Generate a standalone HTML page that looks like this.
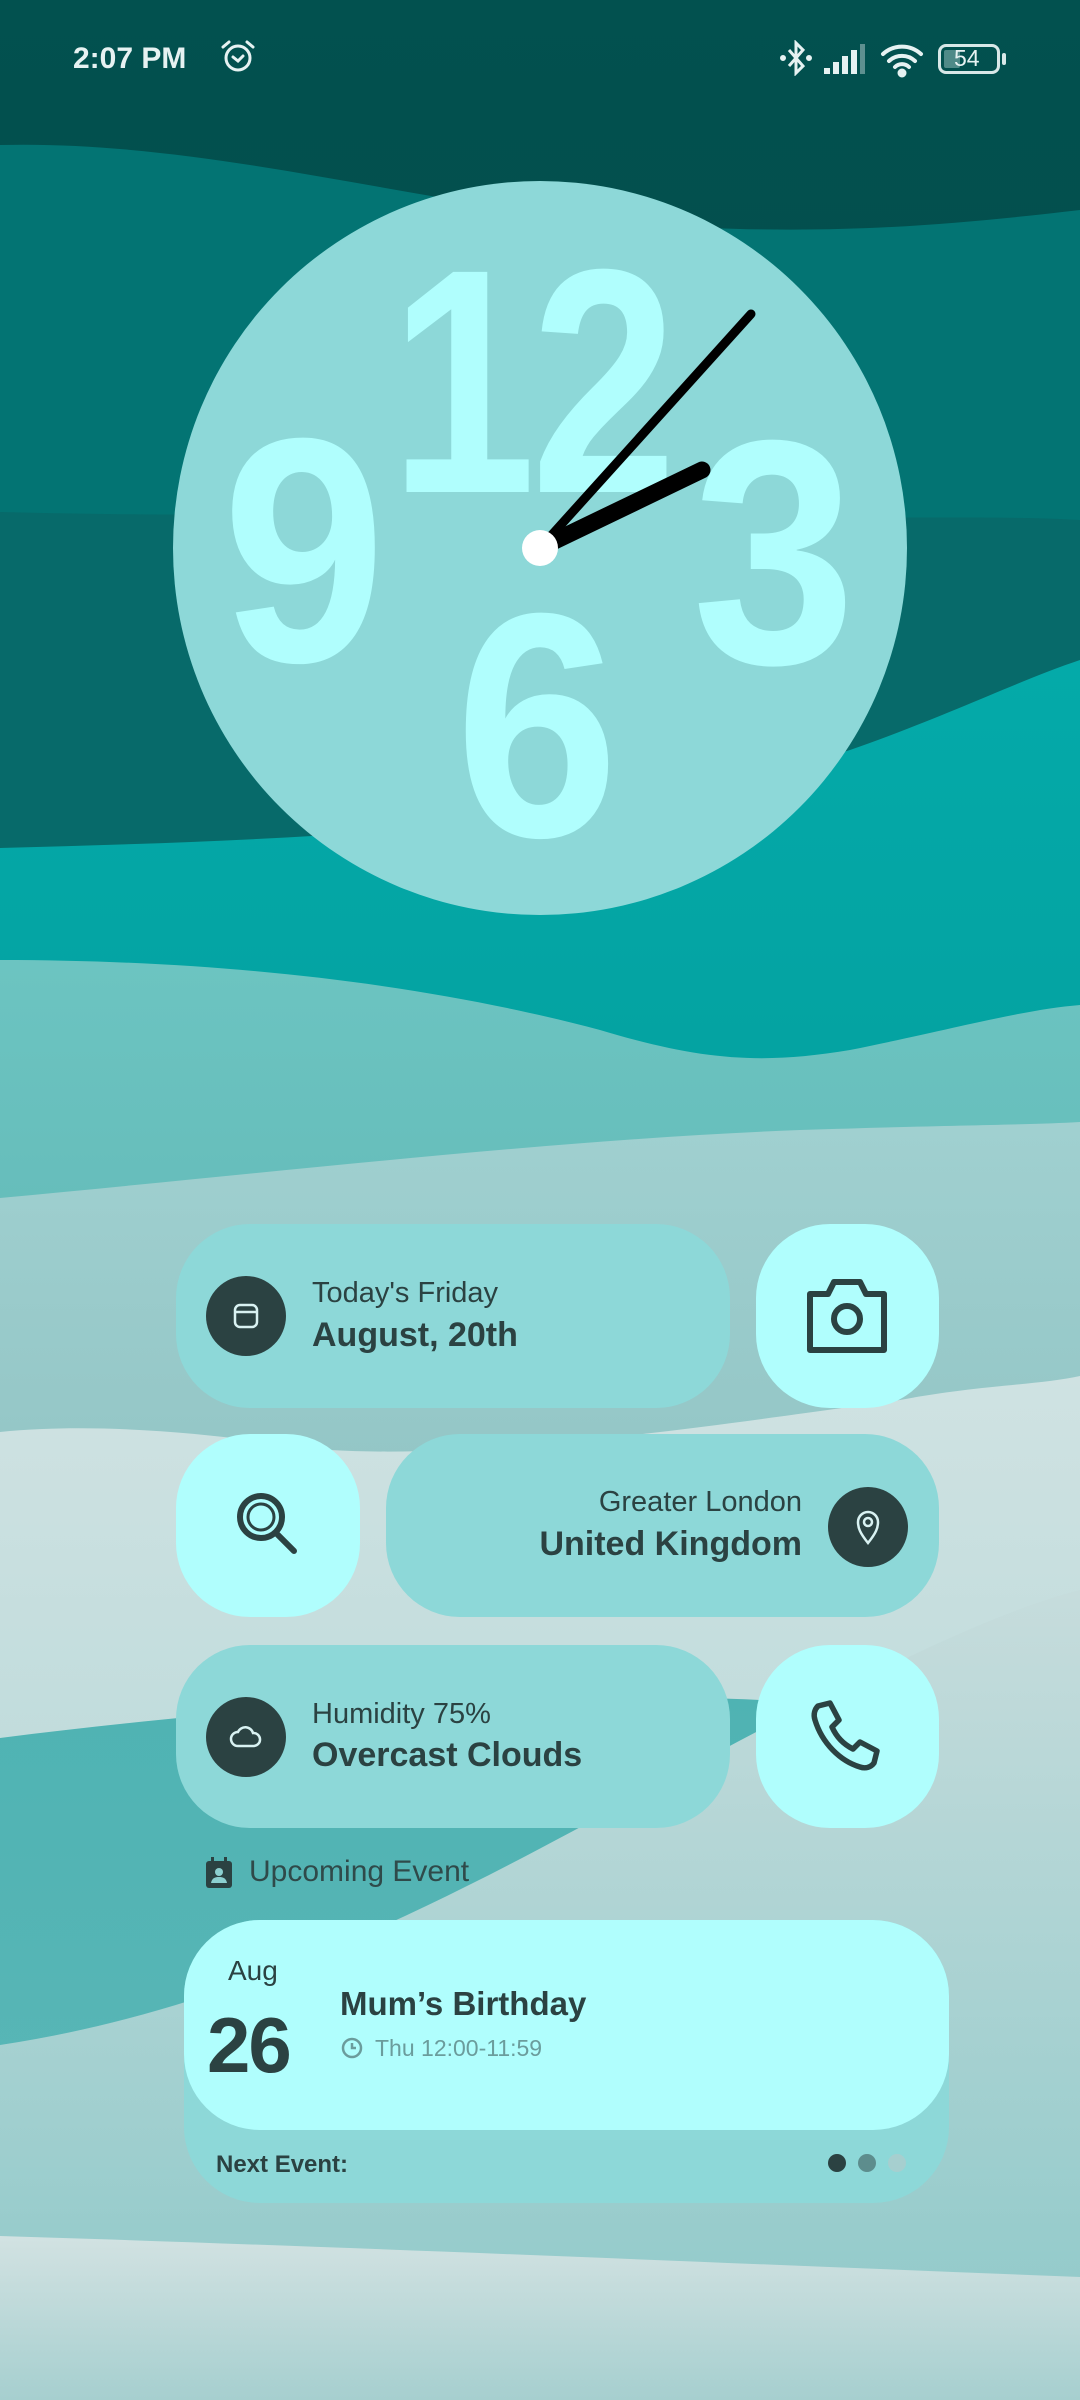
<!DOCTYPE html>
<html><head><meta charset="utf-8"><style>
*{margin:0;padding:0;box-sizing:border-box}
body{width:1080px;height:2400px;overflow:hidden;position:relative;font-family:"Liberation Sans",sans-serif;background:#0a4a4c}
.abs{position:absolute}
.w{position:absolute;border-radius:74px;background:#8dd8d8}
.b{background:#b0fefd}
.dc{position:absolute;width:80px;height:80px;border-radius:50%;background:#2b4242}
.t1{position:absolute;font-size:29px;color:#2b4242}
.t2{position:absolute;font-size:34px;font-weight:bold;color:#2b4242}
.num{position:absolute;font-family:"Liberation Sans",sans-serif;font-weight:bold;font-size:160px;line-height:160px;color:#b0fefd;transform-origin:0 0;white-space:nowrap}
</style></head><body>
<svg class="abs" style="left:0;top:0" width="1080" height="2400" viewBox="0 0 1080 2400">
<defs>
<linearGradient id="g0" x1="0" y1="0" x2="0" y2="1"><stop offset="0" stop-color="#02514f"/><stop offset="1" stop-color="#0b3f40"/></linearGradient>
<linearGradient id="g4" x1="0" y1="0" x2="0" y2="1"><stop offset="0" stop-color="#04aaa9"/><stop offset="1" stop-color="#028a89"/></linearGradient>
<linearGradient id="g5" x1="0" y1="0" x2="0" y2="1"><stop offset="0" stop-color="#6cc4c1"/><stop offset="1" stop-color="#4a9d9d"/></linearGradient>
<linearGradient id="g6" x1="0" y1="0" x2="0" y2="1"><stop offset="0" stop-color="#a0d0d0"/><stop offset="1" stop-color="#72abab"/></linearGradient>
<linearGradient id="g7" x1="0" y1="0" x2="0" y2="1"><stop offset="0" stop-color="#cfe2e2"/><stop offset="1" stop-color="#a8d2d2"/></linearGradient>
<linearGradient id="g8" x1="0" y1="0" x2="0" y2="1"><stop offset="0" stop-color="#4fb3b3"/><stop offset="1" stop-color="#5fb8b8"/></linearGradient>
<linearGradient id="gP2" x1="0" y1="0" x2="0" y2="1"><stop offset="0" stop-color="#c6dcdc"/><stop offset="1" stop-color="#8cc8c8"/></linearGradient>
<linearGradient id="g9" x1="0" y1="0" x2="0" y2="1"><stop offset="0" stop-color="#d2e2e2"/><stop offset="1" stop-color="#a6cfcf"/></linearGradient>
</defs>
<rect width="1080" height="2400" fill="url(#g0)"/>
<path d="M0 145 C200 140 400 200 600 220 C800 240 950 225 1080 210 L1080 2400 L0 2400Z" fill="#037473"/>
<path d="M0 512 C300 520 500 505 700 515 C900 520 1000 515 1080 520 L1080 2400 L0 2400Z" fill="#076a6a"/>
<path d="M0 848 C300 840 600 830 850 750 C950 715 1020 680 1080 660 L1080 2400 L0 2400Z" fill="url(#g4)"/>
<path d="M0 960 C250 960 450 990 600 1030 C700 1060 760 1065 850 1050 C950 1030 1020 1010 1080 1005 L1080 2400 L0 2400Z" fill="url(#g5)"/>
<path d="M0 1198 C300 1170 550 1140 800 1130 C950 1125 1030 1125 1080 1122 L1080 2400 L0 2400Z" fill="url(#g6)"/>
<path d="M0 1432 C120 1420 250 1440 330 1450 C500 1460 750 1420 900 1400 C980 1385 1040 1385 1080 1376 L1080 2400 L0 2400Z" fill="url(#g7)"/>
<path d="M0 1738 C300 1700 550 1690 760 1700 C900 1706 1000 1700 1080 1700 L1080 2400 L0 2400Z" fill="url(#g8)"/>
<path d="M0 2045 C300 2000 550 1840 760 1730 C900 1660 1000 1610 1080 1590 L1080 2400 L0 2400Z" fill="url(#gP2)"/>
<path d="M0 2236 C300 2245 700 2262 1080 2277 L1080 2400 L0 2400Z" fill="url(#g9)"/>
<circle cx="540" cy="548" r="367" fill="#8dd8d8"/>
</svg>

<!-- status bar -->
<div class="abs" style="left:73px;top:42px;font-size:30px;font-weight:bold;color:#e6f2f2">2:07 PM</div>
<svg class="abs" style="left:220px;top:38px" width="36" height="36" viewBox="0 0 36 36" fill="none" stroke="#e6f2f2" stroke-width="3"><circle cx="18" cy="20" r="12"/><path d="M13 19l5 4 5-5M3 9l6-5M33 9l-6-5" stroke-linecap="round"/></svg>
<svg class="abs" style="left:780px;top:40px" width="32" height="36" viewBox="0 0 32 36" fill="none" stroke="#e6f2f2" stroke-width="3"><path d="M9 10l14 16-7 7V3l7 7L9 26"/><circle cx="3" cy="18" r="1.5" fill="#e6f2f2"/><circle cx="29" cy="18" r="1.5" fill="#e6f2f2"/></svg>
<svg class="abs" style="left:824px;top:44px" width="42" height="30" viewBox="0 0 42 30"><rect x="0" y="24" width="6" height="6" fill="#e6f2f2"/><rect x="9" y="18" width="6" height="12" fill="#e6f2f2"/><rect x="18" y="12" width="6" height="18" fill="#e6f2f2"/><rect x="27" y="6" width="6" height="24" fill="#e6f2f2"/><rect x="36" y="0" width="5" height="30" fill="#5e9090"/></svg>
<svg class="abs" style="left:880px;top:42px" width="46" height="36" viewBox="0 0 46 36" fill="none" stroke="#e6f2f2" stroke-width="4" stroke-linecap="round"><path d="M3 12a28 28 0 0 1 38 0M9 19a19 19 0 0 1 26 0M15 25a10 10 0 0 1 14 0"/><circle cx="22" cy="31" r="2.5" fill="#e6f2f2"/></svg>
<div class="abs" style="left:938px;top:44px;width:62px;height:30px;border:3px solid #d8e8e8;border-radius:8px"></div>
<div class="abs" style="left:944px;top:50px;width:16px;height:18px;background:#4f8a88;border-radius:2px"></div>
<div class="abs" style="left:1002px;top:53px;width:4px;height:12px;background:#d8e8e8;border-radius:2px"></div>
<div class="abs" style="left:954px;top:45px;font-size:23px;color:#e6f2f2">54</div>

<!-- clock numerals -->
<div class="num" style="left:390px;top:222px;transform:scale(1.64,2);letter-spacing:-3px">12</div>
<div class="num" style="left:222px;top:391px;transform:scale(1.84,2)">9</div>
<div class="num" style="left:692px;top:393px;transform:scale(1.84,2)">3</div>
<div class="num" style="left:455px;top:566px;transform:scale(1.84,2)">6</div>
<svg class="abs" style="left:0;top:0" width="1080" height="950" viewBox="0 0 1080 950">
<line x1="540" y1="548" x2="751" y2="314" stroke="#000" stroke-width="9" stroke-linecap="round"/>
<line x1="540" y1="548" x2="702" y2="470" stroke="#000" stroke-width="17" stroke-linecap="round"/>
<circle cx="540" cy="548" r="18" fill="#fff"/>
</svg>

<!-- widgets -->
<div class="w" style="left:176px;top:1224px;width:554px;height:184px"></div>
<div class="dc" style="left:206px;top:1276px"></div>
<svg class="abs" style="left:232px;top:1302px" width="28" height="28" viewBox="0 0 28 28" fill="none" stroke="#d9f2f2" stroke-width="2.5"><rect x="3" y="3" width="22" height="22" rx="5"/><path d="M3 10h22"/></svg>
<div class="t1" style="left:312px;top:1277px">Today's Friday</div>
<div class="t2" style="left:312px;top:1316px">August, 20th</div>

<div class="w b" style="left:756px;top:1224px;width:183px;height:184px"></div>
<svg class="abs" style="left:802px;top:1274px" width="90" height="84" viewBox="0 0 90 84" fill="none" stroke="#2b4242" stroke-width="6" stroke-linejoin="round"><path d="M8 20h18l6-12h26l6 12h18v56H8z"/><circle cx="45" cy="45" r="13"/></svg>

<div class="w b" style="left:176px;top:1434px;width:184px;height:183px"></div>
<svg class="abs" style="left:232px;top:1488px" width="74" height="74" viewBox="0 0 74 74" fill="none" stroke="#2b4242" stroke-width="6" stroke-linecap="round"><circle cx="29" cy="29" r="21"/><circle cx="29" cy="29" r="13" stroke-width="3"/><path d="M45 46l17 17"/></svg>

<div class="w" style="left:386px;top:1434px;width:553px;height:183px"></div>
<div class="t1" style="left:400px;top:1486px;width:402px;text-align:right">Greater London</div>
<div class="t2" style="left:400px;top:1525px;width:402px;text-align:right">United Kingdom</div>
<div class="dc" style="left:828px;top:1487px"></div>
<svg class="abs" style="left:854px;top:1507px" width="28" height="40" viewBox="0 0 28 40" fill="none" stroke="#d9f2f2" stroke-width="2.5"><path d="M14 36C6 26 4 21 4 15a10 10 0 0 1 20 0c0 6-2 11-10 21z"/><circle cx="14" cy="15" r="4"/></svg>

<div class="w" style="left:176px;top:1645px;width:554px;height:183px"></div>
<div class="dc" style="left:206px;top:1697px"></div>
<svg class="abs" style="left:228px;top:1722px" width="36" height="30" viewBox="0 0 36 30" fill="none" stroke="#d9f2f2" stroke-width="2.5"><path d="M10 24a7 7 0 0 1 0-14 8 8 0 0 1 15 1 6.5 6.5 0 0 1 1 13z"/></svg>
<div class="t1" style="left:312px;top:1698px">Humidity 75%</div>
<div class="t2" style="left:312px;top:1736px">Overcast Clouds</div>

<div class="w b" style="left:756px;top:1645px;width:183px;height:183px"></div>
<svg class="abs" style="left:808px;top:1698px" width="76" height="76" viewBox="0 0 76 76" fill="none" stroke="#2b4242" stroke-width="5.5" stroke-linejoin="round"><path d="M10 8l12-3 9 17-7 7c4 9 11 17 21 22l7-7 17 9-3 12c-3 4-8 6-14 4C32 63 14 45 7 22c-2-6 0-11 3-14z"/></svg>

<!-- upcoming -->
<svg class="abs" style="left:205px;top:1857px" width="28" height="32" viewBox="0 0 28 32"><rect x="1" y="4" width="26" height="27" rx="3" fill="#2b4242"/><rect x="6" y="0" width="3" height="7" fill="#2b4242"/><rect x="19" y="0" width="3" height="7" fill="#2b4242"/><circle cx="14" cy="15" r="4" fill="#8cd0d0"/><path d="M6 26c1-5 4-6 8-6s7 1 8 6z" fill="#8cd0d0"/></svg>
<div class="abs" style="left:249px;top:1855px;font-size:30px;color:#2f4a4a">Upcoming Event</div>

<div class="w" style="left:184px;top:1920px;width:765px;height:283px;border-radius:76px"></div>
<div class="w b" style="left:184px;top:1920px;width:765px;height:210px;border-radius:76px"></div>
<div class="abs" style="left:228px;top:1955px;font-size:28px;color:#2b4242">Aug</div>
<div class="abs" style="left:207px;top:2000px;font-size:78px;font-weight:bold;color:#2b4242;letter-spacing:-2px">26</div>
<div class="abs" style="left:340px;top:1985px;font-size:33px;font-weight:bold;color:#2b4242">Mum’s Birthday</div>
<svg class="abs" style="left:340px;top:2036px" width="24" height="24" viewBox="0 0 24 24" fill="none" stroke="#6b9c9c" stroke-width="2.5"><circle cx="12" cy="12" r="9"/><path d="M12 7v5h4"/></svg>
<div class="abs" style="left:375px;top:2035px;font-size:23px;color:#6b9c9c">Thu 12:00-11:59</div>
<div class="abs" style="left:216px;top:2151px;font-size:24px;font-weight:bold;color:#2b4242">Next Event:</div>
<div class="abs" style="left:828px;top:2154px;width:18px;height:18px;border-radius:50%;background:#2b4242"></div>
<div class="abs" style="left:858px;top:2154px;width:18px;height:18px;border-radius:50%;background:#5d8d8d"></div>
<div class="abs" style="left:888px;top:2154px;width:18px;height:18px;border-radius:50%;background:#a6cfcf"></div>
</body></html>
